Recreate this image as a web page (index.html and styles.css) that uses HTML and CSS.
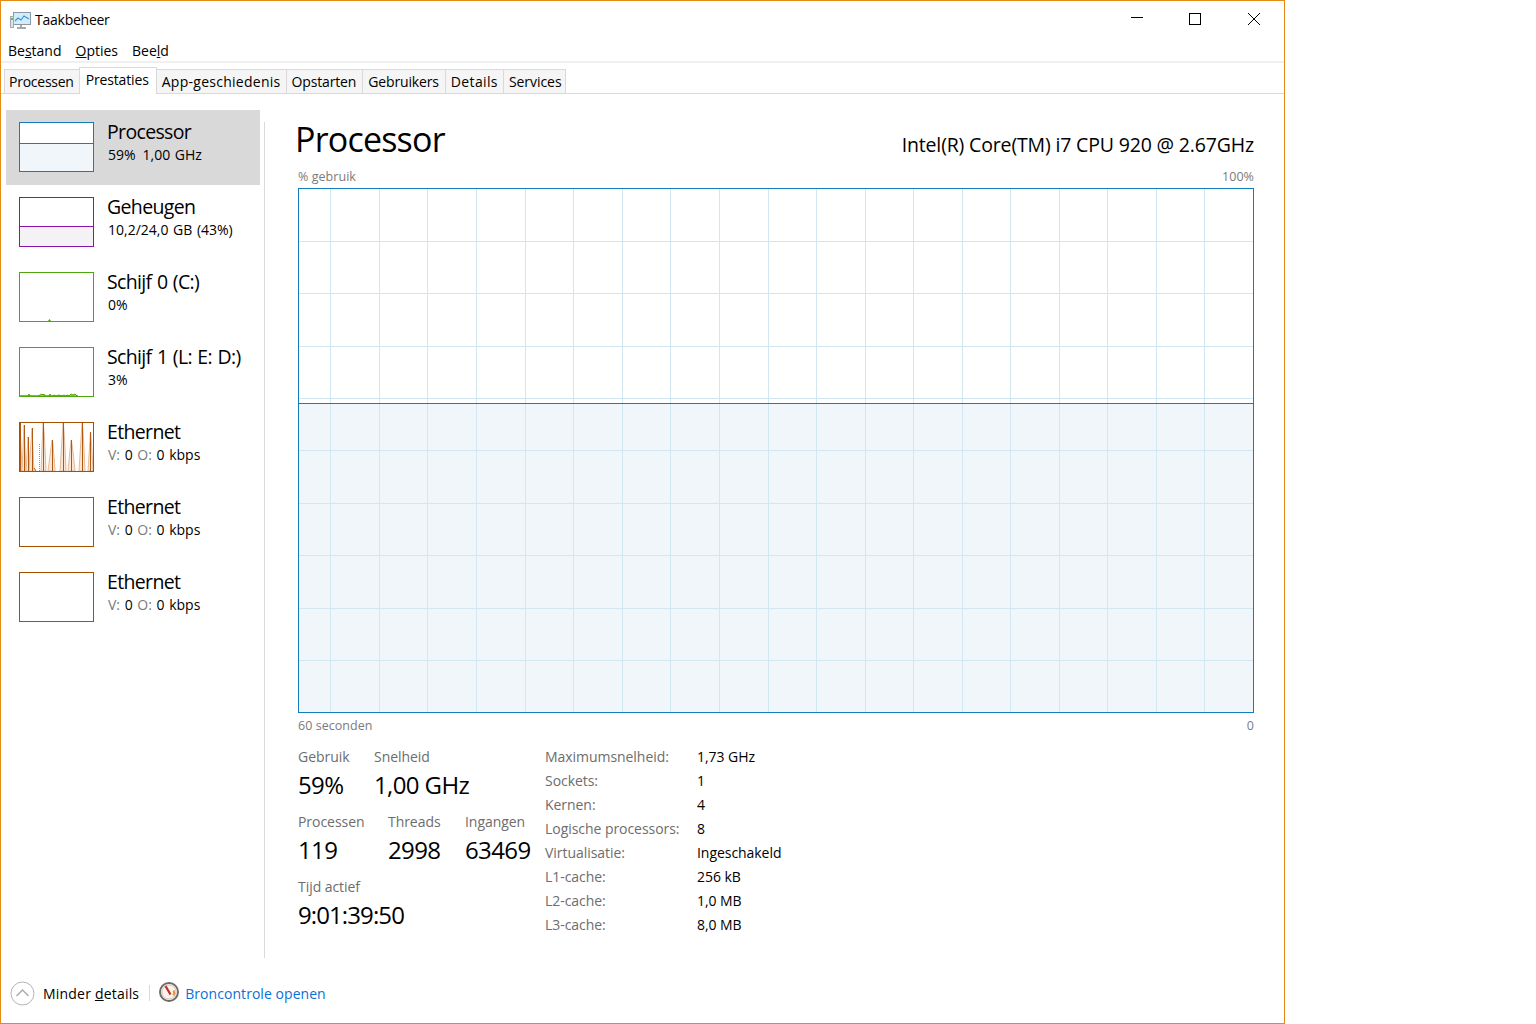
FILE: index.html
```html
<!DOCTYPE html>
<html lang="nl">
<head>
<meta charset="utf-8">
<title>Taakbeheer</title>
<link rel="stylesheet" href="styles.css">
</head>
<body>
<div class="window">
  <header class="titlebar">
    <svg class="app-icon" width="21" height="17" viewBox="0 0 21 17">
      <rect x="3.500" y="0.500" width="17" height="12" fill="#d4ebfa" stroke="#8f989e"/>
      <path d="M5 9l3-3 3 2 3-4 5 3" fill="none" stroke="#2f9be0" stroke-width="1.200"/>
      <rect x="0.500" y="4.500" width="3" height="11" fill="#dfe3e5" stroke="#a4a9ad"/>
      <rect x="1" y="6" width="2" height="2" fill="#4ec94e"/>
      <path d="M11 13v2M7 16h9" stroke="#a4a9ad" stroke-width="2"/>
    </svg>
    <span class="app-title">Taakbeheer</span>
    <div class="win-controls">
      <svg class="wc" width="14" height="14" viewBox="0 0 14 14"><path d="M0 5.500h12" stroke="#000" fill="none"/></svg>
      <svg class="wc" width="14" height="14" viewBox="0 0 14 14"><rect x="0.500" y="1.500" width="11" height="11" stroke="#000" fill="none"/></svg>
      <svg class="wc" width="14" height="14" viewBox="0 0 14 14"><path d="M1 1l12 12M13 1L1 13" stroke="#000" fill="none"/></svg>
    </div>
  </header>
  <nav class="menubar">
    <span>Be<u>s</u>tand</span><span><u>O</u>pties</span><span>Bee<u>l</u>d</span>
  </nav>
  <div class="tabs">
    <span class="tab">Processen</span>
    <span class="tab active">Prestaties</span>
    <span class="tab tab-app">App-geschiedenis</span>
    <span class="tab">Opstarten</span>
    <span class="tab">Gebruikers</span>
    <span class="tab tab-det">Details</span>
    <span class="tab">Services</span>
  </div>
  <main class="main">
    <aside class="sidebar">
      <div class="item selected">
        <div class="thumb cpu"><div class="fill fill-cpu"></div></div>
        <div class="item-text"><div class="item-name">Processor</div><div class="item-sub">59%&ensp;1,00 GHz</div></div>
      </div>
      <div class="item">
        <div class="thumb mem"><div class="fill fill-mem"></div></div>
        <div class="item-text"><div class="item-name">Geheugen</div><div class="item-sub">10,2/24,0 GB (43%)</div></div>
      </div>
      <div class="item">
        <div class="thumb disk">
          <svg class="thumb-svg" viewBox="0 0 73 48" preserveAspectRatio="none"><path d="M28 48l1.500-2 1.500 2z" fill="#4ea600"/></svg>
        </div>
        <div class="item-text"><div class="item-name">Schijf 0 (C:)</div><div class="item-sub">0%</div></div>
      </div>
      <div class="item">
        <div class="thumb disk">
          <svg class="thumb-svg" viewBox="0 0 73 48" preserveAspectRatio="none"><path d="M0 48L8 48l1-2 1 2h8l2-1 2-1 1 1 1-1 1 2h4l1-2 1 2h2l1-1 2 1 3-1 3 1 2-1 2 1 1-1 2 1 2-2 2 1 2-1 2 2h1z" fill="#cfe8b8" stroke="#4ea600" stroke-width="1"/></svg>
        </div>
        <div class="item-text"><div class="item-name">Schijf 1 (L: E: D:)</div><div class="item-sub">3%</div></div>
      </div>
      <div class="item">
        <div class="thumb net">
          <svg class="thumb-svg" viewBox="0 0 73 48" preserveAspectRatio="none">
            <g transform="translate(-1 0)">
              <g fill="#fbe6d6" stroke="#e2bb9b" stroke-width="1">
                <path d="M-1 48Q1 0 1 0Q1 0 3 48z"/>
                <path d="M3 48Q5 2 5 2Q5 2 7 48z"/>
                <path d="M7 48Q9 14 9 14Q9 14 11 48z"/>
                <path d="M10 48Q13 5 13 5Q13 5 15 48z"/>
                <path d="M22 48Q24 0 24 0Q25 0 27 48z"/>
                <path d="M29 48Q33 17 33 17Q34 17 36 48z"/>
                <path d="M41 48Q44 0 44 0Q45 0 47 48z"/>
                <path d="M49 48Q52 17 52 17Q53 17 56 48z"/>
                <path d="M60 48Q63 0 63 0Q64 0 66 48z"/>
                <path d="M69 48Q71.500 9 71.500 9Q72 9 74 48z"/>
              </g>
              <path fill="none" stroke="#b2590f" stroke-width="1" d="M1.500 48V0M5.500 48V2M9.500 48V14M13.500 48V5M15 45l2 3M24.500 48V0M33.500 48V17M44.500 48V0M52.500 48V17M63.500 48V0M71.500 48V9"/>
              <path fill="none" stroke="#d9825a" stroke-width="1" stroke-dasharray="1 1" d="M0.500 48V0M20.500 48V21"/>
            </g>
          </svg>
        </div>
        <div class="item-text"><div class="item-name">Ethernet</div><div class="item-sub"><span class="mute">V:</span> 0 <span class="mute">O:</span> 0 kbps</div></div>
      </div>
      <div class="item">
        <div class="thumb net"></div>
        <div class="item-text"><div class="item-name">Ethernet</div><div class="item-sub"><span class="mute">V:</span> 0 <span class="mute">O:</span> 0 kbps</div></div>
      </div>
      <div class="item">
        <div class="thumb net"></div>
        <div class="item-text"><div class="item-name">Ethernet</div><div class="item-sub"><span class="mute">V:</span> 0 <span class="mute">O:</span> 0 kbps</div></div>
      </div>
    </aside>
    <section class="content">
      <div class="head">
        <h1 class="h-title">Processor</h1>
        <div class="h-model">Intel(R) Core(TM) i7 CPU 920 @ 2.67GHz</div>
      </div>
      <div class="axis axis-top"><span>% gebruik</span><span>100%</span></div>
      <svg class="chart" width="956" height="525" viewBox="0 0 956 525">
        <rect x="0" y="215" width="956" height="310" fill="#f1f6fa"/>
        <path fill="none" stroke="#d3e7f3" d="M32.500 0V525M81.500 0V525M129.500 0V525M178.500 0V525M227.500 0V525M275.500 0V525M324.500 0V525M372.500 0V525M421.500 0V525M470.500 0V525M518.500 0V525M567.500 0V525M615.500 0V525M664.500 0V525M712.500 0V525M761.500 0V525M809.500 0V525M858.500 0V525M906.500 0V525M0 53.500H956M0 105.500H956M0 158.500H956M0 210.500H956M0 262.500H956M0 315.500H956M0 367.500H956M0 420.500H956M0 472.500H956"/>
        <path fill="none" stroke="#117dbb" d="M0 215.500H956"/>
        <rect x="0.500" y="0.500" width="955" height="524" fill="none" stroke="#117dbb"/>
      </svg>
      <div class="axis axis-bottom"><span>60 seconden</span><span>0</span></div>
      <div class="stats">
        <div class="stats-left">
          <div class="stat-row">
            <div class="stat s-use"><div class="lbl">Gebruik</div><div class="val">59%</div></div>
            <div class="stat"><div class="lbl">Snelheid</div><div class="val">1,00 GHz</div></div>
          </div>
          <div class="stat-row">
            <div class="stat s-proc"><div class="lbl">Processen</div><div class="val">119</div></div>
            <div class="stat s-thr"><div class="lbl">Threads</div><div class="val">2998</div></div>
            <div class="stat"><div class="lbl">Ingangen</div><div class="val">63469</div></div>
          </div>
          <div class="stat-row">
            <div class="stat"><div class="lbl">Tijd actief</div><div class="val val-time">9:01:39:50</div></div>
          </div>
        </div>
        <dl class="specs">
          <dt>Maximumsnelheid:</dt><dd>1,73 GHz</dd>
          <dt>Sockets:</dt><dd>1</dd>
          <dt>Kernen:</dt><dd>4</dd>
          <dt>Logische processors:</dt><dd>8</dd>
          <dt>Virtualisatie:</dt><dd>Ingeschakeld</dd>
          <dt>L1-cache:</dt><dd>256 kB</dd>
          <dt>L2-cache:</dt><dd>1,0 MB</dd>
          <dt>L3-cache:</dt><dd>8,0 MB</dd>
        </dl>
      </div>
    </section>
  </main>
  <footer class="footer">
    <svg class="f-chev" width="25" height="25" viewBox="0 0 25 25"><circle cx="12.500" cy="12.500" r="11.500" fill="#fff" stroke="#b4b4b4"/><path d="M6.500 15l6-6 6 6" fill="none" stroke="#a8a8a8" stroke-width="1.300"/></svg>
    <span class="f-less">Minder <u>d</u>etails</span>
    <span class="f-sep"></span>
    <svg class="f-gauge" width="20" height="20" viewBox="0 0 20 20"><circle cx="10" cy="10" r="9" fill="#fff" stroke="#6f6a66" stroke-width="2"/><circle cx="10" cy="10" r="7" fill="#fbf3ec" stroke="#cfc6bf" stroke-width="1"/><path d="M6.500 4l5 8.500" stroke="#c8281e" stroke-width="2.200"/><path d="M14.500 8.500a5 5 0 0 1 0 5" stroke="#e8912a" stroke-width="2" fill="none"/></svg>
    <span class="f-link">Broncontrole openen</span>
  </footer>
</div>
</body>
</html>
```
FILE: styles.css
```css
* { box-sizing: border-box; }
html, body { margin: 0; padding: 0; background: #fff; }
body { font-family: "Open Sans", "Noto Sans", sans-serif; color: #000; font-size: 14px; letter-spacing: -0.05px; }
.window { width: 1285px; height: 1024px; border: 1px solid #e58b14; display: flex; flex-direction: column; overflow: hidden; }
.titlebar { height: 38px; display: flex; align-items: center; padding-left: 9px; flex: none; }
.app-icon { margin-right: 4px; margin-top: 1px; }
.app-title { line-height: 20px; margin-top: -1px; letter-spacing: -0.25px; }
.win-controls { margin-left: auto; display: flex; gap: 44px; padding-right: 23px; margin-top: -3px; }
.wc { display: block; }
.menubar { height: 24px; display: flex; gap: 14px; padding-left: 7px; align-items: center; flex: none; border-bottom: 2px solid #f0f0f0; letter-spacing: 0; }
.tabs { height: 31px; display: flex; align-items: flex-end; padding-left: 3px; border-bottom: 1px solid #d9d9d9; flex: none; }
.tab { height: 24px; padding: 0 6px 0 5px; background: #f5f5f5; border: 1px solid #d9d9d9; border-bottom: 0; margin-left: -1px; line-height: 23px; white-space: nowrap; letter-spacing: -0.15px; }
.tab:first-child { margin-left: 0; padding: 0 5px 0 4px; letter-spacing: -0.25px; }
.tab:last-child { padding-right: 3px; letter-spacing: -0.05px; }
.tab.active { height: 27px; padding: 0 7px 0 6px; background: #fff; position: relative; top: 1px; line-height: 24px; z-index: 1; }
.tab-app { padding-right: 5px; letter-spacing: 0.27px; }
.tab-det { padding-right: 5px; letter-spacing: 0.36px; }
.main { flex: 1; display: flex; min-height: 0; }
.sidebar { width: 259px; padding: 16px 0 0 5px; flex: none; }
.item { width: 254px; height: 75px; display: flex; padding: 12px 0 0 13px; }
.item.selected { background: #d9d9d9; }
.thumb { width: 75px; height: 50px; border: 1px solid; background: #fff; position: relative; flex: none; overflow: hidden; }
.thumb.cpu { border-color: #117dbb; }
.thumb.mem { border-color: #8b12ae; }
.thumb.disk { border-color: #4da60c; }
.thumb.net { border-color: #a74f01; }
.fill { position: absolute; left: 0; right: 0; bottom: 0; border-top: 1px solid; }
.fill-cpu { height: 28px; background: #f1f6fa; border-color: #117dbb; }
.fill-mem { height: 20px; background: #f4f2f4; border-color: #8b12ae; }
.thumb-svg { display: block; width: 73px; height: 48px; }
.item-text { margin-left: 13px; margin-top: -3px; white-space: nowrap; }
.item-name { font-size: 19.500px; line-height: 26px; letter-spacing: -0.65px; word-spacing: 1px; }
.item-sub { line-height: 19px; padding-left: 1px; letter-spacing: 0; word-spacing: 1px; }
.mute { color: #7b7b7b; }
.content { flex: 1; margin-left: 4px; margin-top: 28px; border-left: 1px solid #d9d9d9; padding-left: 33px; padding-right: 30px; min-width: 0; display: flex; flex-direction: column; }
.head { display: flex; justify-content: space-between; align-items: baseline; height: 44px; }
.h-title { margin: -2px 0 0 -3px; font-size: 34px; font-weight: 400; line-height: 38px; letter-spacing: -0.8px; }
.h-model { font-size: 19.500px; letter-spacing: -0.16px; }
.axis { display: flex; justify-content: space-between; color: #7b7b7b; font-size: 12.500px; line-height: 18px; letter-spacing: 0.05px; }
.axis-top { height: 22px; padding-top: 2px; }
.axis-bottom { height: 30px; align-items: flex-start; padding-top: 4px; }
.chart { display: block; flex: none; }
.stats { display: flex; padding-top: 4px; }
.stats-left { width: 247px; flex: none; }
.stat-row { display: flex; height: 65px; }
.lbl { color: #6d6d6d; line-height: 20px; }
.val { font-size: 24px; line-height: 35px; letter-spacing: -0.6px; white-space: nowrap; }
.val-time { letter-spacing: -0.9px; }
.s-use { width: 76px; }
.s-proc { width: 90px; }
.s-thr { width: 77px; }
.specs { margin: 0; display: grid; grid-template-columns: 152px 1fr; grid-auto-rows: 24px; line-height: 20px; height: 192px; }
.specs dt { color: #6d6d6d; }
.specs dd { margin: 0; }
.footer { display: flex; align-items: center; height: 65px; flex: none; padding: 5px 0 0 9px; }
.f-less { margin-left: 8px; letter-spacing: 0.2px; }
.f-sep { width: 1px; height: 16px; background: #d9d9d9; margin: 0 9px 0 10px; }
.f-gauge { margin-top: -2px; }
.f-link { color: #0a6fd6; margin-left: 6px; letter-spacing: 0.05px; }
```
